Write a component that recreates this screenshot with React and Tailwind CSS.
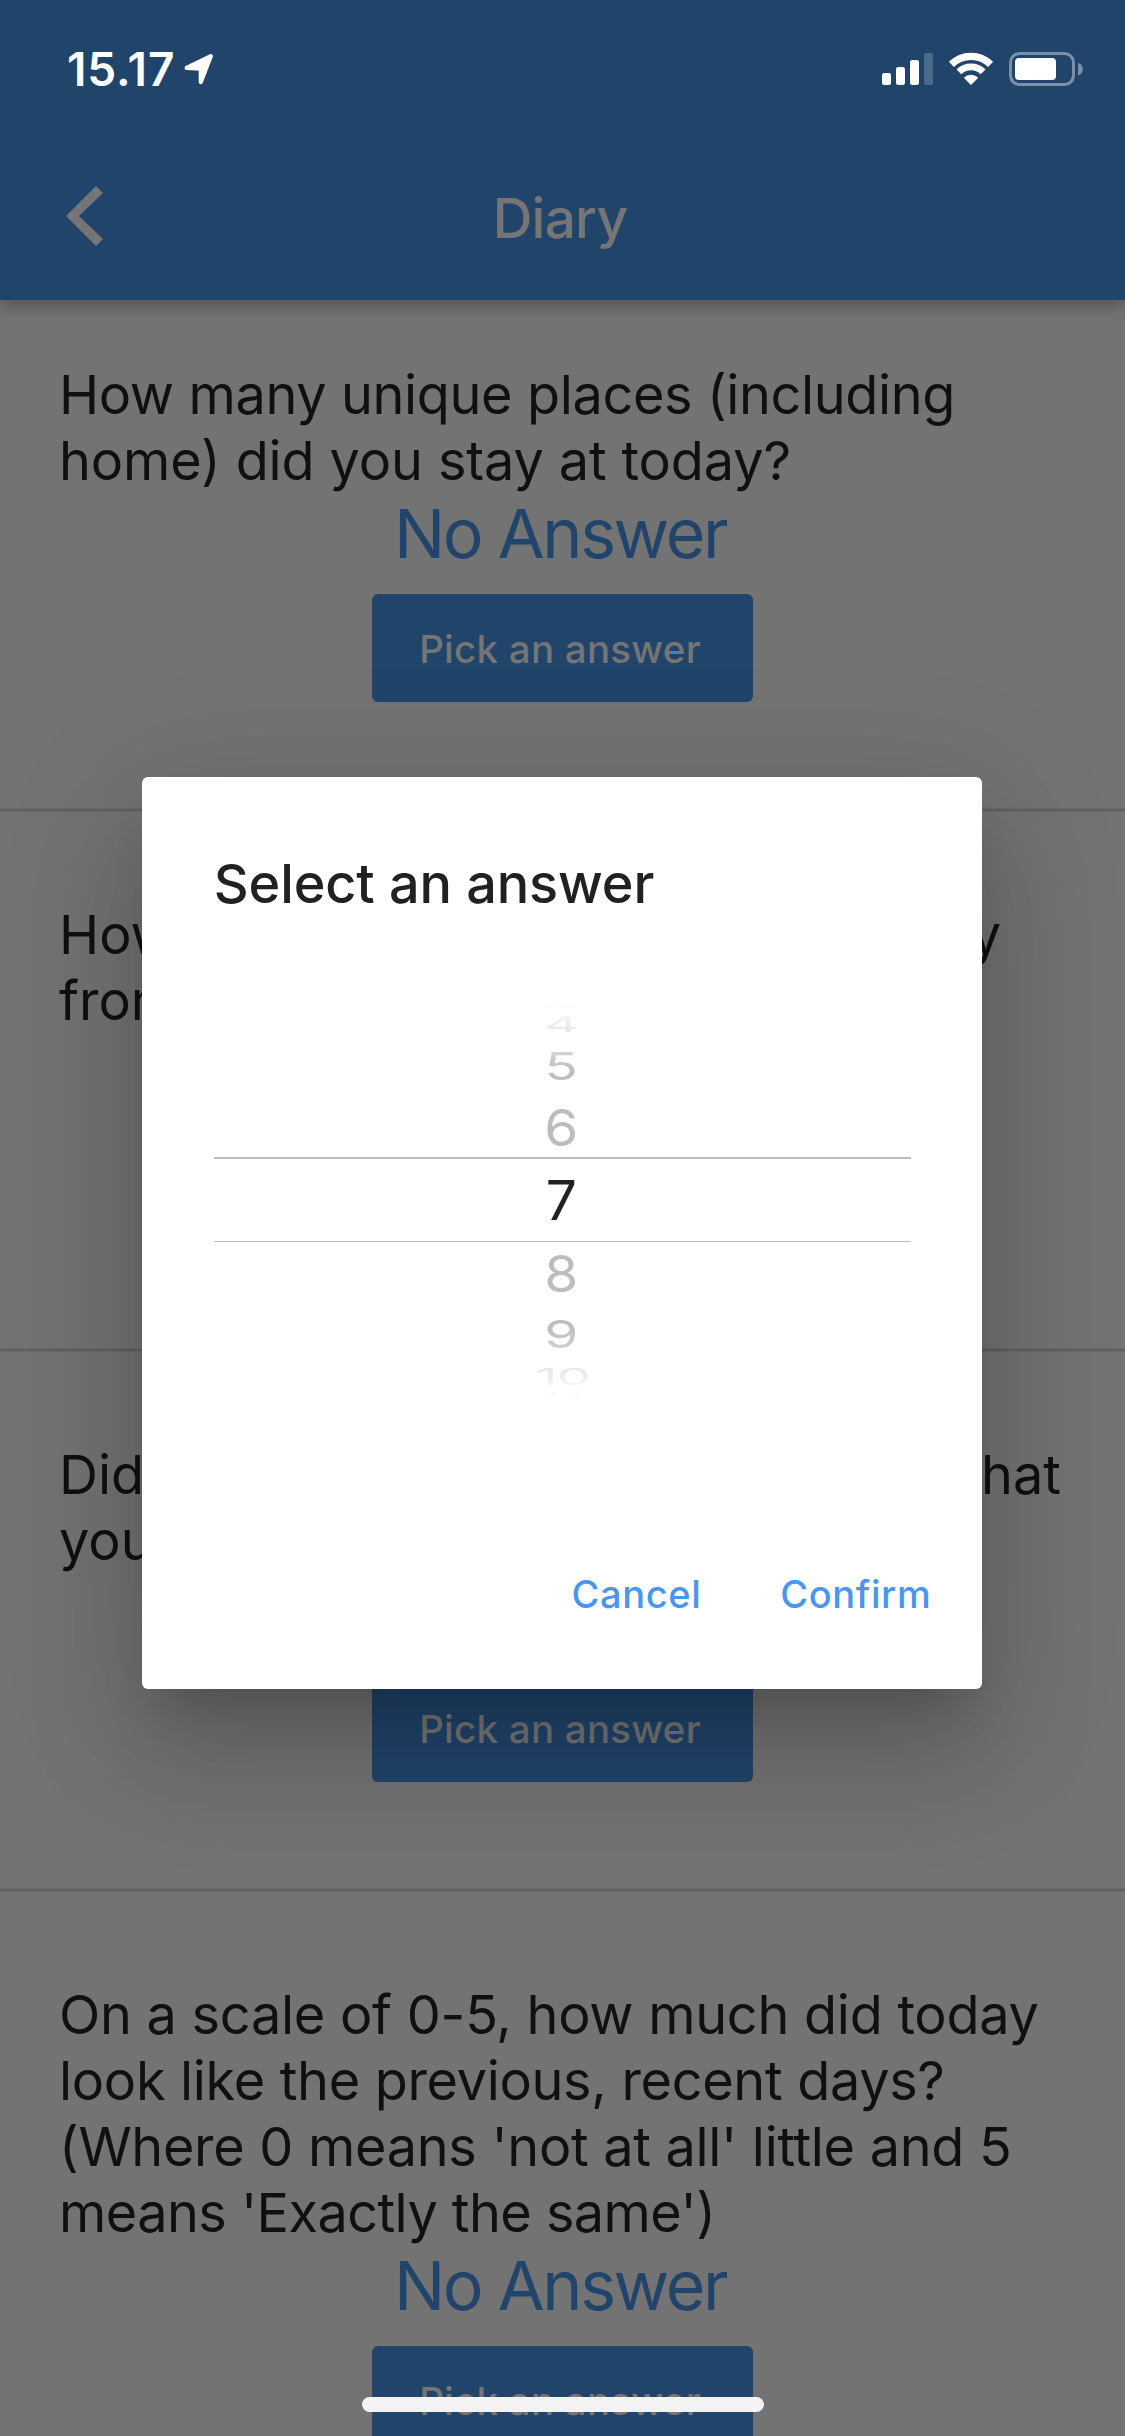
import React from "react";

function LocationArrow() {
  return (
    <svg className="mt-[18px] ml-[9px] h-[31px] w-[31px]" viewBox="0 0 31 31">
      <path
        d="M2.6 14L26.8 2.2L16.8 28V14.6Z"
        fill="#fff"
        stroke="#fff"
        strokeWidth="4.2"
        strokeLinejoin="round"
      />
    </svg>
  );
}

function SignalBars() {
  return (
    <svg className="h-[34px] w-[51px]" viewBox="0 0 51 34" fill="#fff">
      <rect x="0" y="21" width="9" height="12" rx="2.2" />
      <rect x="14" y="15" width="9" height="18" rx="2.2" />
      <rect x="28" y="8" width="9" height="25" rx="2.2" />
      <rect x="42" y="1" width="9" height="32" rx="2.2" fill="#4a6a8a" />
    </svg>
  );
}

function Wifi() {
  return (
    <svg className="ml-[15px] h-[34px] w-[46px]" viewBox="0 0 46 34" fill="none" stroke="#fff">
      <path d="M3.4 12.4A27.8 27.8 0 0 1 42.6 12.4" strokeWidth="7.2" />
      <path d="M10.9 19.9A17.2 17.2 0 0 1 35.1 19.9" strokeWidth="6.8" />
      <path d="M23 33L15.8 25.8A10.2 10.2 0 0 1 30.2 25.8Z" fill="#fff" stroke="none" />
    </svg>
  );
}

function Battery() {
  return (
    <svg className="ml-[15px] h-[34px] w-[74px]" viewBox="0 0 74 34">
      <rect x="1.5" y="1.5" width="63" height="31" rx="9" fill="none" stroke="#7a8fa8" strokeWidth="3" />
      <rect x="6" y="6" width="41" height="22" rx="4" fill="#fff" />
      <path d="M69 11A6.4 6.4 0 0 1 69 23.4Z" fill="#7a8fa8" />
    </svg>
  );
}

function StatusBar() {
  return (
    <div className="flex h-[132px] items-start pt-[36px] pr-[42px] pl-[67px] text-white">
      <span className="text-[46px] leading-[66px] font-semibold tracking-[0.9px]">15.17</span>
      <LocationArrow />
      <div className="mt-4 ml-auto flex">
        <SignalBars />
        <Wifi />
        <Battery />
      </div>
    </div>
  );
}

function Header() {
  return (
    <header className="relative z-10 h-[300px] bg-[#21446b] shadow-[0_6px_15px_rgba(0,0,0,0.28)]">
      <StatusBar />
      <div className="grid h-[168px] grid-cols-[1fr_auto_1fr] items-center px-[66px] text-[#757575]">
        <svg className="h-[60px] w-[38px]" viewBox="0 0 38 60" fill="currentColor">
          <path d="M30 0L0 30L30 60L37 53L13 30L37 7Z" />
        </svg>
        <h1 className="mt-[3px] -ml-[5px] text-[55px] leading-[66px] font-medium tracking-[-0.8px]">Diary</h1>
      </div>
    </header>
  );
}

function Question({ className, answer, children }) {
  return (
    <>
      <section className={`shrink-0 ${className}`}>
        <div className="px-[59px] text-[54px] leading-[66px] whitespace-nowrap text-[#101010]">{children}</div>
        <div className="flex flex-col items-center">
          <p className="-mt-px -ml-[5px] text-[68px] leading-[80px] tracking-[-2.4px] text-[#21446b]">{answer}</p>
          <div className="mt-[21px] flex h-[108px] w-[381px] items-center justify-center rounded-[6px] bg-[#21446b] text-[38.5px] font-medium tracking-[0.25px] text-[#757575]">
            <span className="mt-[4px] -ml-[5px]">Pick an answer</span>
          </div>
        </div>
      </section>
      <div className="h-[4px] shrink-0 border-y border-[#6a6a6a] bg-[#616161]" />
    </>
  );
}

function WheelItem({ className, scale, children }) {
  return (
    <div className={`flex items-center justify-center text-[#bdbdbd] ${className}`}>
      <span className={`-ml-[2px] text-[55px] leading-none ${scale}`}>{children}</span>
    </div>
  );
}

function Wheel() {
  return (
    <div className="mt-[83px] h-[400px] [mask-image:linear-gradient(to_bottom,transparent_0px,rgba(0,0,0,0.08)_5px,rgba(0,0,0,0.15)_16px,rgba(0,0,0,0.38)_32px,rgba(0,0,0,0.65)_52px,black_72px,black_325px,rgba(0,0,0,0.72)_349px,rgba(0,0,0,0.4)_367px,rgba(0,0,0,0.15)_385px,rgba(0,0,0,0.08)_395px,transparent_399px)]">
      <WheelItem className="h-2" scale="scale-y-[0.16]">3</WheelItem>
      <WheelItem className="mt-2 h-4" scale="scale-y-[0.4]">4</WheelItem>
      <WheelItem className="mt-5 h-7" scale="scale-y-[0.7]">5</WheelItem>
      <WheelItem className="mt-[28px] h-[38px]" scale="scale-y-[0.93]">6</WheelItem>
      <div className="mt-[11px] flex h-[85px] items-center justify-center border-t-2 border-b border-[#bdbdbd] text-[55px] leading-none text-[#212121]">
        <span className="-ml-[2px]">7</span>
      </div>
      <WheelItem className="mt-[12px] h-[38px]" scale="scale-y-[0.93]">8</WheelItem>
      <WheelItem className="mt-[27px] h-[30px]" scale="scale-y-[0.7]">9</WheelItem>
      <WheelItem className="mt-[18px] h-[18px]" scale="scale-y-[0.42]">
        <span className="ml-[3px] tracking-[-1px]">10</span>
      </WheelItem>
      <WheelItem className="mt-[8px] h-[7px]" scale="scale-y-[0.14]">11</WheelItem>
    </div>
  );
}

function Dialog() {
  return (
    <div className="absolute inset-0 z-20 flex items-start justify-center pt-[777px] pr-[0.5px]">
      <div className="h-[912px] w-[840px] rounded-[6px] bg-white pt-[74px] shadow-[0_33px_45px_-21px_rgba(0,0,0,0.18),0_72px_114px_9px_rgba(0,0,0,0.13),0_27px_138px_24px_rgba(0,0,0,0.08)]">
        <div className="px-[71.5px]">
          <h2 className="text-[54px] leading-[66px] font-medium tracking-[-0.1px] text-[#212121]">Select an answer</h2>
          <Wheel />
        </div>
        <div className="mt-[171px] flex justify-end gap-[79px] pr-[51px] text-[38px] leading-[46px] font-medium text-[#4997ed]">
          <span className="tracking-[0.6px]">Cancel</span>
          <span className="tracking-[0.6px]">Confirm</span>
        </div>
      </div>
    </div>
  );
}

export default function App() {
  return (
    <div className="relative h-[2436px] w-[1125px] overflow-hidden bg-[#737373] font-['Inter',sans-serif]">
      <Header />
      <main className="flex h-[2136px] flex-col overflow-hidden">
        <Question className="h-[508px] pt-[62px]" answer="No Answer">
          <p className="tracking-[-0.36px]">How many unique places (including</p>
          <p className="tracking-[-0.12px]">home) did you stay at today?</p>
        </Question>
        <Question className="h-[536px] pt-[90px]" answer="No Answer">
          <p className="flex w-[942px] justify-between">
            <span>How many</span>
            <span>hours were you away</span>
          </p>
          <p>from home today?</p>
        </Question>
        <Question className="h-[536px] pt-[90px]" answer="No Answer">
          <p className="flex w-[1002px] justify-between">
            <span>Did anything</span>
            <span>happen today that</span>
          </p>
          <p>you did not expect?</p>
        </Question>
        <Question className="h-[668px] pt-[90px]" answer="No Answer">
          <p className="tracking-[-0.26px]">On a scale of 0-5, how much did today</p>
          <p className="tracking-[-0.32px]">look like the previous, recent days?</p>
          <p className="tracking-[-0.3px]">(Where 0 means 'not at all' little and 5</p>
          <p className="tracking-[-0.55px]">means 'Exactly the same')</p>
        </Question>
      </main>
      <Dialog />
      <div className="absolute bottom-[24px] left-[362px] z-30 h-[15px] w-[402px] rounded-full bg-[#f3f3f3]" />
    </div>
  );
}
